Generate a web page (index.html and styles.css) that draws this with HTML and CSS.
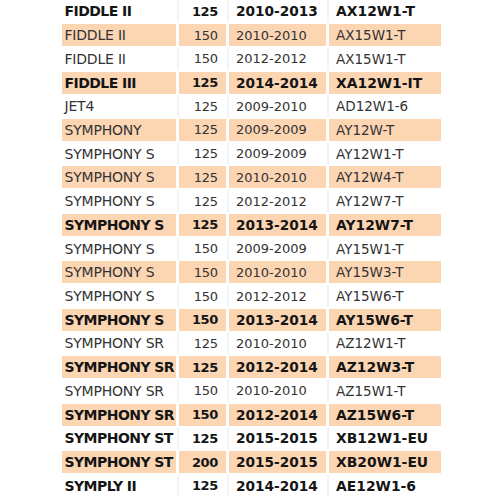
FILE: index.html
```html
<!DOCTYPE html>
<html>
<head>
<meta charset="utf-8">
<link rel="stylesheet" href="styles.css">
</head>
<body>
<div class="table">
  <div class="row b"><div class="c name">FIDDLE II</div><div class="c cc">125</div><div class="c yr">2010-2013</div><div class="c code">AX12W1-T</div></div>
  <div class="row alt"><div class="c name">FIDDLE II</div><div class="c cc">150</div><div class="c yr">2010-2010</div><div class="c code">AX15W1-T</div></div>
  <div class="row"><div class="c name">FIDDLE II</div><div class="c cc">150</div><div class="c yr">2012-2012</div><div class="c code">AX15W1-T</div></div>
  <div class="row alt b"><div class="c name">FIDDLE III</div><div class="c cc">125</div><div class="c yr">2014-2014</div><div class="c code">XA12W1-IT</div></div>
  <div class="row"><div class="c name">JET4</div><div class="c cc">125</div><div class="c yr">2009-2010</div><div class="c code">AD12W1-6</div></div>
  <div class="row alt"><div class="c name">SYMPHONY</div><div class="c cc">125</div><div class="c yr">2009-2009</div><div class="c code">AY12W-T</div></div>
  <div class="row"><div class="c name">SYMPHONY S</div><div class="c cc">125</div><div class="c yr">2009-2009</div><div class="c code">AY12W1-T</div></div>
  <div class="row alt"><div class="c name">SYMPHONY S</div><div class="c cc">125</div><div class="c yr">2010-2010</div><div class="c code">AY12W4-T</div></div>
  <div class="row"><div class="c name">SYMPHONY S</div><div class="c cc">125</div><div class="c yr">2012-2012</div><div class="c code">AY12W7-T</div></div>
  <div class="row alt b"><div class="c name">SYMPHONY S</div><div class="c cc">125</div><div class="c yr">2013-2014</div><div class="c code">AY12W7-T</div></div>
  <div class="row"><div class="c name">SYMPHONY S</div><div class="c cc">150</div><div class="c yr">2009-2009</div><div class="c code">AY15W1-T</div></div>
  <div class="row alt"><div class="c name">SYMPHONY S</div><div class="c cc">150</div><div class="c yr">2010-2010</div><div class="c code">AY15W3-T</div></div>
  <div class="row"><div class="c name">SYMPHONY S</div><div class="c cc">150</div><div class="c yr">2012-2012</div><div class="c code">AY15W6-T</div></div>
  <div class="row alt b"><div class="c name">SYMPHONY S</div><div class="c cc">150</div><div class="c yr">2013-2014</div><div class="c code">AY15W6-T</div></div>
  <div class="row"><div class="c name">SYMPHONY SR</div><div class="c cc">125</div><div class="c yr">2010-2010</div><div class="c code">AZ12W1-T</div></div>
  <div class="row alt b"><div class="c name">SYMPHONY SR</div><div class="c cc">125</div><div class="c yr">2012-2014</div><div class="c code">AZ12W3-T</div></div>
  <div class="row"><div class="c name">SYMPHONY SR</div><div class="c cc">150</div><div class="c yr">2010-2010</div><div class="c code">AZ15W1-T</div></div>
  <div class="row alt b"><div class="c name">SYMPHONY SR</div><div class="c cc">150</div><div class="c yr">2012-2014</div><div class="c code">AZ15W6-T</div></div>
  <div class="row b"><div class="c name">SYMPHONY ST</div><div class="c cc">125</div><div class="c yr">2015-2015</div><div class="c code">XB12W1-EU</div></div>
  <div class="row alt b"><div class="c name">SYMPHONY ST</div><div class="c cc">200</div><div class="c yr">2015-2015</div><div class="c code">XB20W1-EU</div></div>
  <div class="row b"><div class="c name">SYMPLY II</div><div class="c cc">125</div><div class="c yr">2014-2014</div><div class="c code">AE12W1-6</div></div>
</div>
</body>
</html>
```

FILE: styles.css
```css
html, body {
  margin: 0;
  padding: 0;
  background: #ffffff;
}

body {
  font-family: "DejaVu Sans", Verdana, sans-serif;
  color: #333333;
}

.table {
  display: flex;
  flex-direction: column;
  gap: 1.72px;
  padding-top: 0.4px;
  margin-left: 62px;
}

.row {
  display: grid;
  grid-template-columns: 114px 47px 97px 112px;
  column-gap: 3px;
  height: 22px;
}

.c {
  display: flex;
  align-items: center;
  white-space: nowrap;
  background: #ffffff;
}

.row:not(.alt) .c + .c {
  box-shadow: -2px 0 0 #f3f3f3;
}

.row.alt .c {
  background: #fcd5b3;
}

.name {
  padding-left: 2.5px;
  font-size: 14px;
  letter-spacing: -0.2px;
}

.cc {
  justify-content: flex-end;
  padding-right: 8px;
  font-size: 13px;
  letter-spacing: -0.15px;
}

.yr {
  padding-left: 7px;
  font-size: 13px;
}

.code {
  padding-left: 7px;
  font-size: 13.5px;
}

.row.b .c {
  font-weight: bold;
  color: #151515;
}

.row.b .name {
  letter-spacing: -0.55px;
}

.row.b .cc {
  letter-spacing: -0.35px;
}

.row.b .yr {
  font-size: 13.7px;
}

.row.b .code {
  font-size: 13.9px;
}
```
